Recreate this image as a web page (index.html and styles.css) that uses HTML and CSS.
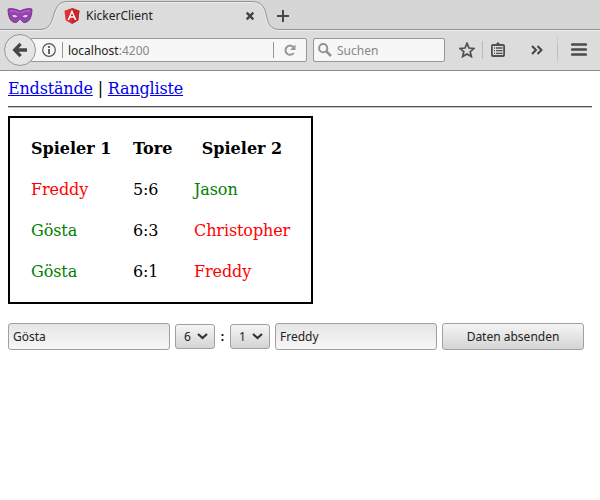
FILE: index.html
```html
<!DOCTYPE html>
<html lang="de">
<head>
<meta charset="utf-8">
<title>KickerClient</title>
<link rel="stylesheet" href="styles.css">
</head>
<body>
<header class="browser">
  <div class="tabs">
    <svg class="tab-shape" width="600" height="30" viewBox="0 0 600 30">
      <path d="M0 29.5H40C49 29.5 51 24 54 14C57 5 60 1.5 68 1.5H251C260 1.5 264 5 266 14C268 24 270 29.5 280 29.5H600V30H0Z" fill="#dcdcdc"/>
      <path d="M0 30.5H40C50 30.5 52 24 55 14C58 6 61 2.5 68 2.5H251C259 2.5 263 6 265 14C267 25 270 30.5 280 30.5H600" fill="none" stroke="#eee"/>
      <path d="M0 29.5H40C49 29.5 51 24 54 14C57 5 60 1.5 68 1.5H251C260 1.5 264 5 266 14C268 24 270 29.5 280 29.5H600" fill="none" stroke="#909497"/>
    </svg>
    <svg class="mask" width="26" height="16" viewBox="0 0 26 16">
      <path fill-rule="evenodd" d="M1 1C5 0 9 1 13 3C17 1 21 0 25 1C25 8 23 14 18 14.5C15 15 14 11 13 11S11 15 8 14.5C3 14 1 8 1 1ZM4.5 7.5C6 10.5 9 10.5 11 8.5C9 6 6.5 6 4.5 7.5ZM21.5 7.5C19.5 6 17 6 15 8.5C17 10.5 20 10.5 21.5 7.5Z" fill="#9c3fba" stroke="#633070" stroke-width=".8"/>
      <path d="M3 3Q8 2 12 5M23 3Q18 2 14 5" fill="none" stroke="#b970cc"/>
    </svg>
    <svg class="angular" width="16" height="16" viewBox="0 0 16 16">
      <path d="M8 0L15.5 2.7L14.3 12.2L8 16L1.7 12.2L.5 2.7Z" fill="#dd3035"/>
      <path d="M8 0L15.5 2.7L14.3 12.2L8 16Z" fill="#c3282d"/>
      <path fill-rule="evenodd" d="M8 1.8L3.5 12H5.2L6.1 9.8H9.9L10.8 12H12.5ZM8 5L9.3 8.3H6.7Z" fill="#fff"/>
    </svg>
    <span class="tab-title">KickerClient</span>
    <svg class="close" width="10" height="10" viewBox="0 0 10 10"><path d="M1.7 1.7L8.3 8.3M8.3 1.7L1.7 8.3" stroke="#444" stroke-width="2.4"/></svg>
    <svg class="plus" width="12" height="12" viewBox="0 0 12 12"><path d="M6 0V12M0 6H12" stroke="#484848" stroke-width="2"/></svg>
  </div>
  <div class="toolbar">
    <div class="back"><svg width="16" height="16" viewBox="0 0 16 16"><path d="M8.6 1.8L2.7 8L8.6 14.2M3 8H15" fill="none" stroke="#444846" stroke-width="3.3"/></svg></div>
    <div class="address">
      <svg class="info" width="14" height="14" viewBox="0 0 14 14"><circle cx="7" cy="7" r="6.3" fill="none" stroke="#555" stroke-width="1.2"/><path d="M7 6V11M7 3V5" stroke="#555" stroke-width="1.8"/></svg>
      <span class="divider"></span>
      <span class="url">localhost<span class="port">:4200</span></span>
      <span class="divider reload-divider"></span>
      <svg class="reload" width="12" height="12" viewBox="0 0 12 12"><path d="M9.6 3.2A4.6 4.6 0 1 0 9.8 9" fill="none" stroke="#8d9aa6" stroke-width="2"/><path d="M11.5 .5V6H6Z" fill="#8d9aa6"/></svg>
    </div>
    <div class="search">
      <svg width="14" height="14" viewBox="0 0 14 14"><circle cx="5.2" cy="5.2" r="4.1" fill="none" stroke="#929292" stroke-width="2"/><path d="M8 8L13 13" stroke="#929292" stroke-width="2.5"/></svg>
      <span>Suchen</span>
    </div>
    <svg class="star" width="16" height="16" viewBox="0 0 16 16"><path d="M8 1.3L10 6L15 6.4L11.2 9.7L12.4 14.6L8 12L3.6 14.6L4.8 9.7L1 6.4L6 6Z" fill="none" stroke="#505050" stroke-width="1.7"/></svg>
    <span class="divider light"></span>
    <svg class="clip" width="14" height="15" viewBox="0 0 14 15"><path d="M4 3L7 0L10 3Z" fill="#505050"/><rect x=".9" y="3" width="12.2" height="11" rx="1" fill="none" stroke="#505050" stroke-width="1.8"/><path d="M3 6H4M5 6H11.5M3 8.7H4M5 8.7H11.5M3 11.4H4M5 11.4H11.5" stroke="#505050" stroke-width="1.3"/></svg>
    <svg class="more" width="12" height="10" viewBox="0 0 12 10"><path d="M1 1L5 5L1 9M6.5 1L10.5 5L6.5 9" fill="none" stroke="#444" stroke-width="2"/></svg>
    <span class="menu-divider"></span>
    <svg class="menu" width="16" height="14" viewBox="0 0 16 14"><path d="M1.3 1.5H14.7M1.3 6.5H14.7M1.3 11.5H14.7" stroke="#484b49" stroke-width="2.7" stroke-linecap="round"/></svg>
  </div>
</header>
<main>
  <nav><a href="#">Endstände</a> | <a href="#">Rangliste</a></nav>
  <hr>
  <table>
    <thead><tr><th class="first">Spieler 1</th><th class="score">Tore</th><th class="second">Spieler 2</th></tr></thead>
    <tbody>
      <tr><td class="loser">Freddy</td><td>5:6</td><td class="winner">Jason</td></tr>
      <tr><td class="winner">Gösta</td><td>6:3</td><td class="loser">Christopher</td></tr>
      <tr><td class="winner">Gösta</td><td>6:1</td><td class="loser">Freddy</td></tr>
    </tbody>
  </table>
  <form>
    <input type="text" value="Gösta">
    <button type="button" class="select">6<svg width="11" height="7" viewBox="0 0 11 7"><path d="M1 1L5.5 5L10 1" fill="none" stroke="#333" stroke-width="2.2"/></svg></button>
    <span class="colon">:</span>
    <button type="button" class="select">1<svg width="11" height="7" viewBox="0 0 11 7"><path d="M1 1L5.5 5L10 1" fill="none" stroke="#333" stroke-width="2.2"/></svg></button>
    <input type="text" value="Freddy">
    <button type="button" class="submit">Daten absenden</button>
  </form>
</main>
</body>
</html>
```
FILE: styles.css
```css
* { box-sizing: border-box; }
body { margin: 0; background: #fff; color: #000; font: 16px/19px "DejaVu Serif", serif; overflow: hidden; }
svg { display: block; flex: none; }
.browser { height: 71px; background: #dcdcdc; border-bottom: 1px solid #8c8c8c; font: 12px/16px "Noto Sans", sans-serif; color: #222; }
.tabs { height: 30px; background: #d6d6d6; display: flex; align-items: center; position: relative; padding: 2px 0 0 7px; }
.tab-shape { position: absolute; left: 0; top: 0; overflow: visible; }
.tabs > :not(.tab-shape) { position: relative; }
.angular { margin-left: 31px; }
.tab-title { width: 160px; margin-left: 6px; }
.close { margin-left: -1px; }
.plus { margin-left: 22px; }
.toolbar { height: 40px; display: flex; align-items: center; padding-left: 4px; position: relative; }
.back { width: 32px; height: 32px; border: 1px solid #969696; border-radius: 50%; background: #e5e5e5; display: flex; align-items: center; justify-content: center; z-index: 1; }
.address { width: 276px; height: 24px; margin-left: -5px; border: 1px solid #979797; border-radius: 0 2px 2px 0; background: #f7f7f7; display: flex; align-items: center; padding-left: 10px; }
.divider { width: 1px; height: 16px; background: #979797; margin-left: 6px; flex: none; }
.url { width: 205px; margin-left: 5px; padding-top: 1px; }
.port { color: #888; }
.reload-divider { margin-left: 0; }
.reload { margin-left: 10px; }
.search { width: 132px; height: 24px; margin-left: 6px; border: 1px solid #979797; border-radius: 2px; background: #f7f7f7; display: flex; align-items: center; padding-left: 4px; gap: 5px; color: #888; }
.search span { padding-top: 1px; }
.star { margin-left: 14px; }
.divider.light { height: 18px; margin-left: 7px; background: #b9b9b9; }
.clip { margin: -2px 0 0 8px; }
.more { margin-left: 26px; }
.menu-divider { width: 1px; height: 34px; margin-left: 14px; background: linear-gradient(#dcdcdc, #b5b5b5, #dcdcdc); }
.menu { margin-left: 13px; }
main { padding: 8px; }
nav { letter-spacing: -.18px; }
a { color: #00e; }
hr { margin: 8px 0; border: 0; border-top: 1px solid #555; border-bottom: 1px solid #c4c4c4; height: 2px; }
table { width: 305px; table-layout: fixed; border: 2px solid #000; padding: 9px; border-spacing: 2px; border-collapse: separate; }
td, th { padding: 10px; height: 39px; white-space: nowrap; }
td { text-align: left; letter-spacing: -.1px; }
.first { width: 100px; }
.score { width: 59px; }
.second { width: 116px; }
.winner { color: green; }
.loser { color: red; }
form { display: flex; align-items: center; margin-top: 19px; height: 27px; gap: 5px; }
input, button { font: 12px/16px "Noto Sans", sans-serif; color: #222; border: 1px solid #a0a0a0; border-radius: 3px; margin: 0; }
input { width: 162px; height: 27px; padding: 0 4px; background: linear-gradient(#e5e5e5, #f7f7f7); }
button { background: linear-gradient(#f5f5f5, #d4d4d4); }
.select { width: 40px; height: 25px; padding: 0 6px 0 8px; display: flex; align-items: center; justify-content: space-between; }
.colon { width: 5px; text-align: center; font: bold 12px/16px "Noto Sans", sans-serif; }
.submit { width: 142px; height: 27px; padding: 0; }
```
